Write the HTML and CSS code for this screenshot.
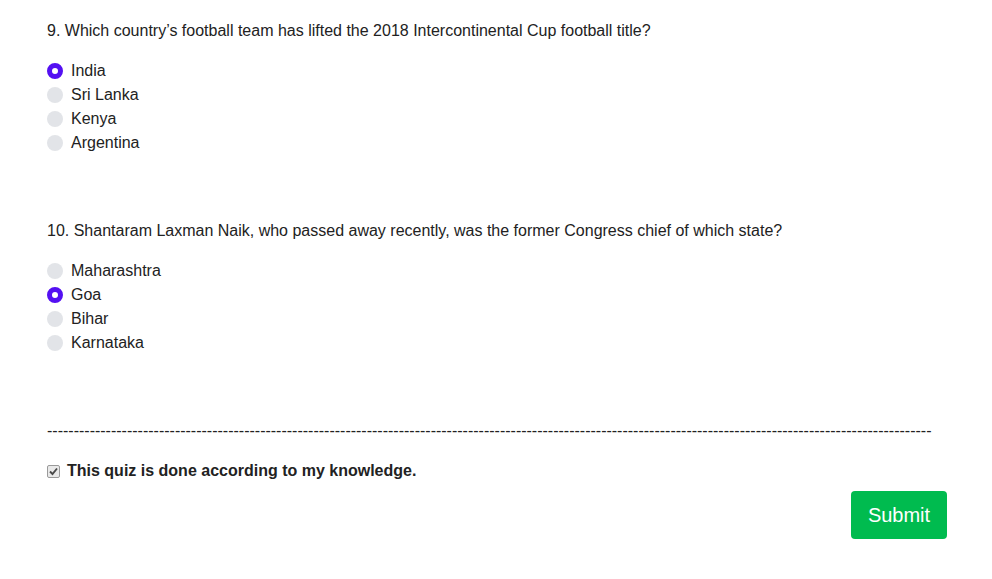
FILE: index.html
```html
<!DOCTYPE html>
<html>
<head>
<meta charset="utf-8">
<link rel="stylesheet" href="styles.css">
</head>
<body>
<div class="quiz">
  <div class="question">
    <p class="q-text">9. Which country’s football team has lifted the 2018 Intercontinental Cup football title?</p>
    <ul class="options">
      <li class="option"><span class="radio checked"></span>India</li>
      <li class="option"><span class="radio"></span>Sri Lanka</li>
      <li class="option"><span class="radio"></span>Kenya</li>
      <li class="option"><span class="radio"></span>Argentina</li>
    </ul>
  </div>
  <div class="question">
    <p class="q-text">10. Shantaram Laxman Naik, who passed away recently, was the former Congress chief of which state?</p>
    <ul class="options">
      <li class="option"><span class="radio"></span>Maharashtra</li>
      <li class="option"><span class="radio checked"></span>Goa</li>
      <li class="option"><span class="radio"></span>Bihar</li>
      <li class="option"><span class="radio"></span>Karnataka</li>
    </ul>
  </div>
  <div class="divider">----------------------------------------------------------------------------------------------------------------------------------------------------------------------</div>
  <label class="confirm"><span class="checkbox"><svg width="9" height="9" viewBox="0 0 9 9"><path d="M1 4.5 L3.5 7 L8 1.5" fill="none" stroke="#4a4a4a" stroke-width="1.9"/></svg></span>This quiz is done according to my knowledge.</label>
  <div class="actions"><button class="submit">Submit</button></div>
</div>
</body>
</html>
```
FILE: styles.css
```css
html, body {
  margin: 0;
  padding: 0;
  background: #fff;
}
body {
  font-family: "Liberation Sans", Arial, sans-serif;
  font-size: 16px;
  line-height: 24px;
  color: #222;
}
.quiz {
  padding: 19px 45px 0 47px;
}
.question {
  margin-bottom: 64px;
}
.q-text {
  margin: 0 0 16px;
}
.options {
  list-style: none;
  margin: 0;
  padding: 0;
}
.option {
  display: flex;
  align-items: center;
  height: 24px;
  gap: 8px;
}
.radio {
  width: 16px;
  height: 16px;
  border-radius: 50%;
  background: #e2e4e8;
  box-sizing: border-box;
  flex: none;
}
.radio.checked {
  background: #fff;
  border: 5px solid #5410f2;
}
.divider {
  white-space: nowrap;
  overflow: hidden;
  margin-bottom: 16px;
}
.confirm {
  display: flex;
  align-items: center;
  gap: 7px;
  font-weight: bold;
  height: 24px;
}
.checkbox {
  width: 13px;
  height: 13px;
  box-sizing: border-box;
  border: 1px solid #9a9a9a;
  border-radius: 2px;
  background: #e9e9e9;
  display: flex;
  align-items: center;
  justify-content: center;
  flex: none;
}
.actions {
  display: flex;
  justify-content: flex-end;
  margin-top: 8px;
}
.submit {
  width: 96px;
  height: 48px;
  border: none;
  border-radius: 4px;
  background: #00bb4f;
  color: #fff;
  font-family: "Liberation Sans", Arial, sans-serif;
  font-size: 20px;
  padding: 0;
}
```
